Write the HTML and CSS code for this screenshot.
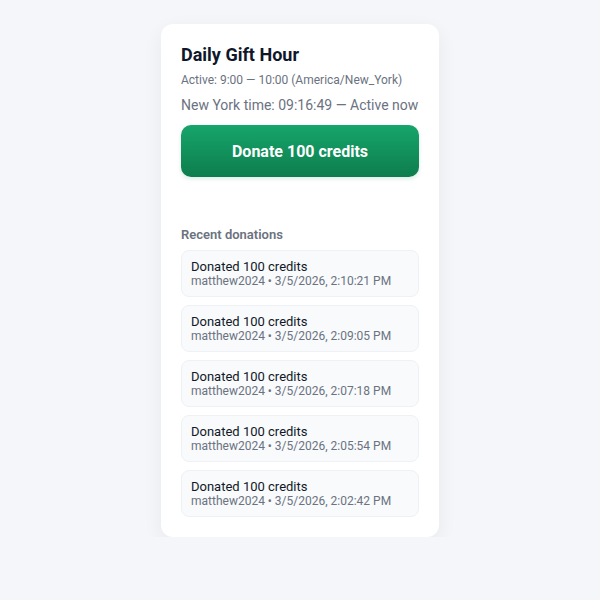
FILE: index.html
```html
<!DOCTYPE html>
<html>
<head>
<meta charset="utf-8">
<link rel="stylesheet" href="styles.css">
</head>
<body>
<div class="card">
  <h1 class="title">Daily Gift Hour</h1>
  <div class="window">Active: 9:00 — 10:00 (America/New_York)</div>
  <div class="clock">New York time: 09:16:49 — Active now</div>
  <button class="donate">Donate 100 credits</button>
  <div class="status"></div>
  <h2 class="section">Recent donations</h2>
  <ul class="list">
    <li class="item"><div class="item-title">Donated 100 credits</div><div class="item-meta">matthew2024 • 3/5/2026, 2:10:21 PM</div></li>
    <li class="item"><div class="item-title">Donated 100 credits</div><div class="item-meta">matthew2024 • 3/5/2026, 2:09:05 PM</div></li>
    <li class="item"><div class="item-title">Donated 100 credits</div><div class="item-meta">matthew2024 • 3/5/2026, 2:07:18 PM</div></li>
    <li class="item"><div class="item-title">Donated 100 credits</div><div class="item-meta">matthew2024 • 3/5/2026, 2:05:54 PM</div></li>
    <li class="item"><div class="item-title">Donated 100 credits</div><div class="item-meta">matthew2024 • 3/5/2026, 2:02:42 PM</div></li>
  </ul>
</div>
</body>
</html>
```
FILE: styles.css
```css
html, body {
  margin: 0;
  padding: 0;
}
body {
  background: #f5f6fa;
  font-family: Roboto, "Liberation Sans", sans-serif;
  color: #111827;
  padding-top: 24px;
}
.card {
  width: 278px;
  box-sizing: border-box;
  margin: 0 auto;
  background: #ffffff;
  border-radius: 12px;
  box-shadow: 0 6px 20px rgba(17, 24, 39, 0.06);
  padding: 20px 20px 20px;
}
.title {
  margin: 0;
  font-size: 18px;
  font-weight: 700;
  line-height: 22px;
  color: #0f172a;
}
.window {
  margin-top: 6px;
  font-size: 12px;
  line-height: 16px;
  color: #6b7280;
}
.clock {
  margin-top: 8px;
  font-size: 14px;
  line-height: 18px;
  color: #6b7280;
}
.donate {
  display: block;
  width: 100%;
  height: 52px;
  margin-top: 11px;
  border: none;
  border-radius: 10px;
  background: linear-gradient(180deg, #16a56b 0%, #0e7d4e 100%);
  color: #ffffff;
  font-family: inherit;
  font-size: 16px;
  font-weight: 700;
  box-shadow: 0 2px 4px rgba(14, 125, 78, 0.15);
}
.status {
  height: 32px;
}
.section {
  margin: 18px 0 7px;
  font-size: 13px;
  font-weight: 600;
  line-height: 16px;
  color: #6b7280;
}
.list {
  list-style: none;
  margin: 0;
  padding: 0;
  display: flex;
  flex-direction: column;
  gap: 8px;
}
.item {
  background: #f8fafc;
  border: 1px solid #eef1f5;
  border-radius: 8px;
  padding: 8px 9px;
}
.item-title {
  font-size: 13px;
  line-height: 15px;
  color: #111827;
}
.item-meta {
  font-size: 12px;
  line-height: 14px;
  color: #6b7280;
}
```
